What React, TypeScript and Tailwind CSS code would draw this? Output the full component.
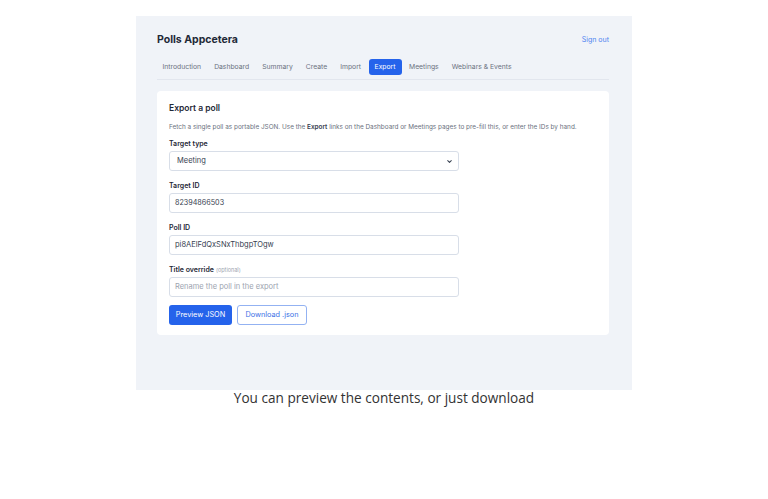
const tabs = ["Introduction", "Dashboard", "Summary", "Create", "Import", "Export", "Meetings", "Webinars & Events"];

function Field({ label, optional, children }: { label: string; optional?: boolean; children: React.ReactNode }) {
  return (
    <div className="flex flex-col gap-[3px]">
      <div className="h-[9px] leading-[9px] text-[7px] font-semibold text-[#1f2937]">
        {label}
        {optional && <span className="ml-[2px] text-[5.5px] font-normal text-[#9ca3af]">(optional)</span>}
      </div>
      {children}
    </div>
  );
}

export default function App() {
  return (
    <div className="w-[768px] h-[499px] bg-white flex flex-col items-center font-['Inter',sans-serif]">
      <div className="mt-[16px] w-[496px] h-[374px] bg-[#f0f3f8] pl-[21px] pr-[23px] pt-[14px]">
        <div className="h-[20px] flex items-center justify-between">
          <h1 className="text-[10.5px] font-bold text-[#1f2937]">Polls Appcetera</h1>
          <span className="text-[7px] text-[#4f84f0]">Sign out</span>
        </div>
        <div className="mt-[9px] pb-[4px] border-b border-[#e2e6ee] flex items-center gap-[2px]">
          {tabs.map((t) => (
            <span
              key={t}
              className={
                t === "Export"
                  ? "h-[16px] px-[6px] flex items-center rounded-[3px] bg-[#2563eb] text-white text-[6.8px]"
                  : "h-[16px] px-[5.5px] flex items-center text-[6.8px] text-[#6b7280]"
              }
            >
              {t}
            </span>
          ))}
        </div>
        <div className="mt-[11px] bg-white rounded-[4px] px-[12px] pt-[12px] pb-[10px]">
          <h2 className="h-[10px] leading-[10px] text-[8.5px] font-semibold text-[#1f2937]">Export a poll</h2>
          <p className="mt-[10px] h-[8px] leading-[8px] text-[6.4px] text-[#6b7280] whitespace-nowrap">
            Fetch a single poll as portable JSON. Use the <b className="font-semibold text-[#374151]">Export</b> links on the Dashboard or Meetings pages to pre-fill this, or enter the IDs by hand.
          </p>
          <div className="mt-[8px] flex flex-col gap-[10px]">
            <Field label="Target type">
              <div className="w-[290px] h-[20px] border border-[#d8dee8] rounded-[3px] flex items-center justify-between pl-[7px] pr-[5px] text-[7.5px] text-[#374151]">
                <span>Meeting</span>
                <svg width="7" height="7" viewBox="0 0 24 24" fill="none" stroke="#374151" strokeWidth="3.5" strokeLinecap="round" strokeLinejoin="round">
                  <path d="M6 9l6 6 6-6" />
                </svg>
              </div>
            </Field>
            <Field label="Target ID">
              <div className="w-[290px] h-[20px] border border-[#d8dee8] rounded-[3px] flex items-center pl-[5px] text-[7.2px] text-[#374151]">82394866503</div>
            </Field>
            <Field label="Poll ID">
              <div className="w-[290px] h-[20px] border border-[#d8dee8] rounded-[3px] flex items-center pl-[5px] text-[7.5px] text-[#374151]">pi8AElFdQxSNxThbgpTOgw</div>
            </Field>
            <Field label="Title override" optional>
              <div className="w-[290px] h-[20px] border border-[#d8dee8] rounded-[3px] flex items-center pl-[5px] text-[7.5px] text-[#9ca3af]">Rename the poll in the export</div>
            </Field>
          </div>
          <div className="mt-[8px] flex gap-[5px]">
            <button className="w-[63px] h-[20px] rounded-[3px] bg-[#2563eb] text-white text-[7.3px]">Preview JSON</button>
            <button className="w-[70px] h-[20px] rounded-[3px] border border-[#93b2f2] bg-white text-[#3b6fe6] text-[7.3px]">Download .json</button>
          </div>
        </div>
      </div>
      <p className="mt-[-2px] text-[13.6px] leading-[20px] text-[#333333] font-['Open_Sans',sans-serif]">You can preview the contents, or just download</p>
    </div>
  );
}
